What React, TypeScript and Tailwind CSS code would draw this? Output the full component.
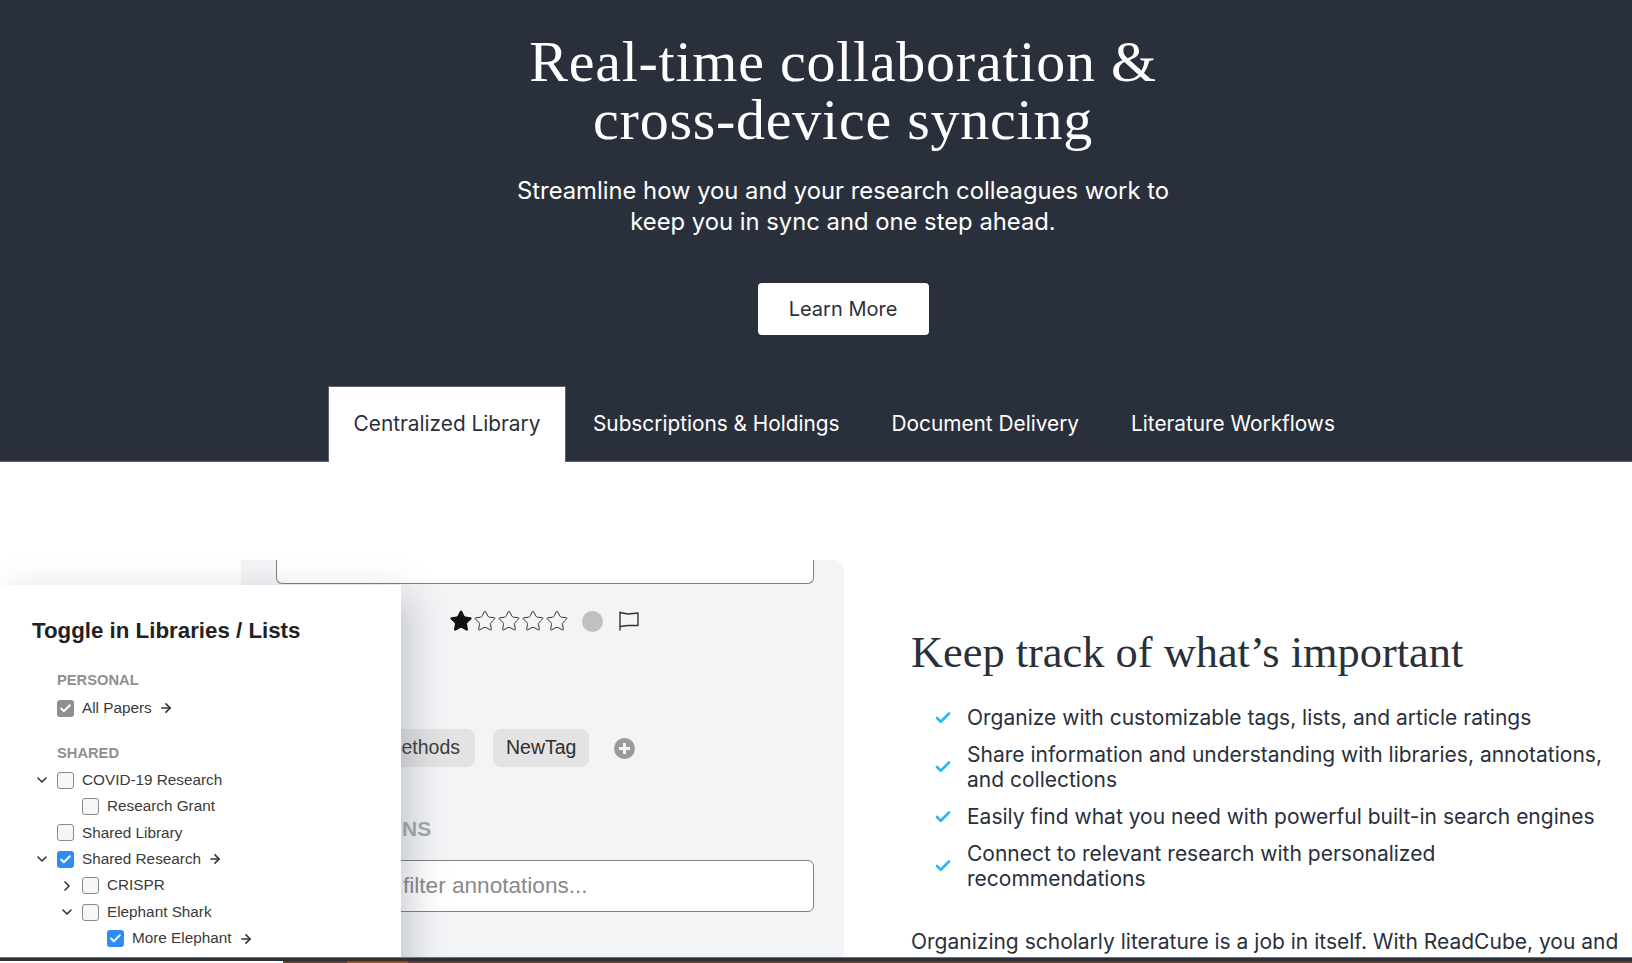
import React from "react";
import { Check, ChevronDown, ChevronRight, ArrowRight, Star } from "lucide-react";

const serif = "font-['Liberation_Serif',serif]";
const sans = "font-['Inter',sans-serif]";
const mac = "font-['Liberation_Sans',sans-serif]";

type TreeRow = {
  label: string;
  indent: number;
  checked?: "blue" | "gray";
  chevron?: "down" | "right";
  arrow?: boolean;
};

const rows: TreeRow[] = [
  { label: "COVID-19 Research", indent: 0, chevron: "down" },
  { label: "Research Grant", indent: 1 },
  { label: "Shared Library", indent: 0 },
  { label: "Shared Research", indent: 0, chevron: "down", checked: "blue", arrow: true },
  { label: "CRISPR", indent: 1, chevron: "right" },
  { label: "Elephant Shark", indent: 1, chevron: "down" },
  { label: "More Elephant", indent: 2, checked: "blue", arrow: true },
];

const features = [
  "Organize with customizable tags, lists, and article ratings",
  "Share information and understanding with libraries, annotations, and collections",
  "Easily find what you need with powerful built-in search engines",
  "Connect to relevant research with personalized recommendations",
];

const tabs = ["Subscriptions & Holdings", "Document Delivery", "Literature Workflows"];

function Box({ checked }: { checked?: "blue" | "gray" }) {
  if (checked) {
    return (
      <span
        className={`flex h-[17px] w-[17px] shrink-0 items-center justify-center rounded-[3px] ${
          checked === "blue" ? "bg-[#2f8cf5]" : "bg-[#8f8f8f]"
        }`}
      >
        <Check size={13} strokeWidth={3.5} className="text-white" />
      </span>
    );
  }
  return <span className="h-[17px] w-[17px] shrink-0 rounded-[3px] border-[1.5px] border-[#8a8a8a] bg-[#f6f6f6]" />;
}

function Row({ row }: { row: TreeRow }) {
  const ml = row.indent === 0 ? "ml-0" : row.indent === 1 ? "ml-[25px]" : "ml-[50px]";
  return (
    <div className={`flex h-[26.4px] items-center ${ml}`}>
      <span className="flex w-[25px] shrink-0 items-center">
        {row.chevron === "down" && <ChevronDown size={16} strokeWidth={2.4} className="ml-[2px] text-[#333]" />}
        {row.chevron === "right" && <ChevronRight size={16} strokeWidth={2.4} className="ml-[2px] text-[#333]" />}
      </span>
      <Box checked={row.checked} />
      <span className="ml-[8px] text-[15.3px] text-[#3a3a3a]">{row.label}</span>
      {row.arrow && <ArrowRight size={14} strokeWidth={2.8} className="ml-[7px] text-[#333]" />}
    </div>
  );
}

function Screenshot() {
  return (
    <div className={`relative h-full w-[844px] shrink-0 ${mac}`}>
      <div className="absolute left-[241px] right-0 top-0 h-[500px] rounded-tr-[10px] bg-[#f3f4f6]">
        <div className="ml-[35px] h-[24px] w-[538px] rounded-b-[6px] border-x-[1.5px] border-b-[1.5px] border-[#808080] bg-white" />
        <div className="absolute left-[208px] top-[49px] flex items-center">
          <Star size={24} strokeWidth={1.2} className="fill-[#111] text-[#111]" />
          <Star size={24} strokeWidth={1} className="text-[#333]" />
          <Star size={24} strokeWidth={1} className="text-[#333]" />
          <Star size={24} strokeWidth={1} className="text-[#333]" />
          <Star size={24} strokeWidth={1} className="text-[#333]" />
          <span className="ml-[13px] h-[21px] w-[21px] rounded-full bg-[#c0c0c0]" />
          <svg viewBox="0 0 22 20" width="22" height="20" fill="none" stroke="#333" strokeWidth="1.4" className="ml-[15px]">
            <path d="M2 .5v19" />
            <path d="M2 1.5l8 1.5 10-1v12.5H10l-8 1" strokeLinejoin="round" />
          </svg>
        </div>
        <div className="absolute left-[160px] top-[169px] flex items-center gap-[18px]">
          <span className="flex h-[38px] w-[74px] items-center justify-end rounded-r-[8px] bg-[#e3e3e3] pr-[15px] text-[19.5px] text-[#3c3c3c]">
            ethods
          </span>
          <span className="flex h-[38px] items-center rounded-[8px] bg-[#e3e3e3] px-[13px] text-[19.5px] text-[#2e2e2e]">
            NewTag
          </span>
          <span className="relative ml-[7px] flex h-[21px] w-[21px] items-center justify-center rounded-full bg-[#9a9a9a]">
            <span className="absolute h-[3px] w-[11px] bg-[#f3f4f6]" />
            <span className="absolute h-[11px] w-[3px] bg-[#f3f4f6]" />
          </span>
        </div>
        <span className="absolute left-[161px] top-[253px] text-[21px] font-bold text-[#a9a9a9]">NS</span>
        <div className="absolute left-[35px] top-[300px] flex h-[52px] w-[538px] items-center rounded-[6px] border-[1.5px] border-[#808080] bg-white pl-[126px] text-[22.6px] text-[#8a8a8a]">
          filter annotations...
        </div>
      </div>
      <div className="absolute left-0 top-[25px] h-[400px] w-[401px] bg-white pl-[32px] pt-[32px] shadow-[8px_12px_36px_rgba(70,80,100,0.3)]">
        <h3 className="text-[22.3px] font-bold leading-[28px] text-[#222]">Toggle in Libraries / Lists</h3>
        <div className="mt-[26px] pl-[25px] text-[14.7px] font-bold leading-[18px] text-[#8f8f8f]">PERSONAL</div>
        <div className="mt-[6px] flex h-[26px] items-center pl-[25px]">
          <Box checked="gray" />
          <span className="ml-[8px] text-[15.3px] text-[#3a3a3a]">All Papers</span>
          <ArrowRight size={14} strokeWidth={2.8} className="ml-[7px] text-[#333]" />
        </div>
        <div className="mt-[23px] pl-[25px] text-[14.7px] font-bold leading-[18px] text-[#8f8f8f]">SHARED</div>
        <div className="mt-[5px]">
          {rows.map((row) => (
            <Row key={row.label} row={row} />
          ))}
          <div className="ml-[75px] mt-[6px] h-[6px] w-[17px] rounded-t-[3px] border-x-[1.5px] border-t-[1.5px] border-[#8a8a8a]" />
        </div>
      </div>
    </div>
  );
}

export default function App() {
  return (
    <div className={`flex h-[963px] flex-col overflow-hidden bg-white ${sans}`}>
      <header className="flex h-[462px] shrink-0 flex-col border-b border-[#5a616c] bg-[#2a303b] pt-[33px] text-white">
        <div className="flex flex-col items-center pl-[54px]">
          <h1 className={`text-center text-[58px] leading-[58px] tracking-[0.75px] ${serif}`}>
            Real-time collaboration &amp;
            <br />
            cross-device syncing
          </h1>
          <p className="mt-[26px] text-center text-[23.8px] leading-[31px]">
            Streamline how you and your research colleagues work to
            <br />
            keep you in sync and one step ahead.
          </p>
          <button className="mt-[46px] h-[52px] w-[171px] rounded-[4px] bg-white text-[20px] text-[#2a303b]">
            Learn More
          </button>
        </div>
        <nav className="mt-[51px] flex h-[76px] shrink-0 items-stretch pl-[328px] text-[20.8px]">
          <div className="mr-[1px] flex w-[238px] items-center justify-center border-x border-t border-[#5a616c] bg-white pb-[1px] text-[#2a303b]">
            Centralized Library
          </div>
          {tabs.map((tab) => (
            <div key={tab} className="flex items-center px-[26px] pb-[1px]">
              {tab}
            </div>
          ))}
        </nav>
      </header>
      <main className="flex min-h-0 flex-1 overflow-hidden pt-[98px]">
        <Screenshot />
        <section className="min-w-0 flex-1 pl-[67px] pr-[14px] pt-[67px] text-[#2a303b]">
          <h2 className={`whitespace-nowrap text-[44.4px] leading-[50px] ${serif}`}>Keep track of what’s important</h2>
          <ul className="mt-[28px] flex flex-col gap-[12px] pl-[23px]">
            {features.map((feature) => (
              <li key={feature} className="flex items-center">
                <Check size={18} strokeWidth={3.5} className="mr-[15px] shrink-0 text-[#2bb8f0]" />
                <span className="text-[21px] leading-[25px]">{feature}</span>
              </li>
            ))}
          </ul>
          <p className="mt-[38px] whitespace-nowrap text-[21px] leading-[25px]">
            Organizing scholarly literature is a job in itself. With ReadCube, you and
          </p>
        </section>
      </main>
      <footer className="flex h-[6px] shrink-0 flex-col">
        <div className="h-[4px] border-t border-[#6b7280] bg-[#2a303b]" />
        <div className="flex h-[2px]">
          <div className="w-[283px] bg-white" />
          <div className="w-[64px] bg-[#6e3a1a]" />
          <div className="w-[61px] bg-[#a84a14]" />
          <div className="flex-1 bg-[#6e3a1a]" />
        </div>
      </footer>
    </div>
  );
}
